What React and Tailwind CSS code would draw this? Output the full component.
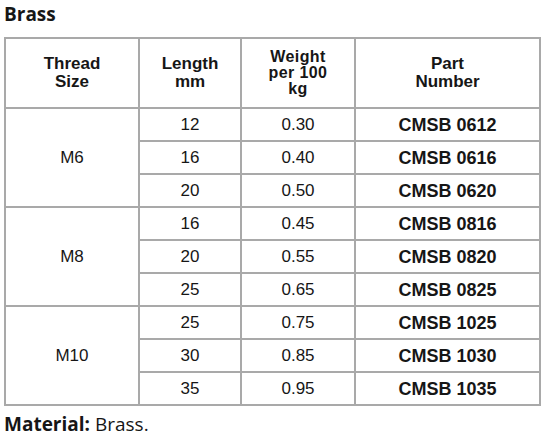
const groups = [
  {
    size: "M6",
    rows: [
      ["12", "0.30", "CMSB 0612"],
      ["16", "0.40", "CMSB 0616"],
      ["20", "0.50", "CMSB 0620"],
    ],
  },
  {
    size: "M8",
    rows: [
      ["16", "0.45", "CMSB 0816"],
      ["20", "0.55", "CMSB 0820"],
      ["25", "0.65", "CMSB 0825"],
    ],
  },
  {
    size: "M10",
    rows: [
      ["25", "0.75", "CMSB 1025"],
      ["30", "0.85", "CMSB 1030"],
      ["35", "0.95", "CMSB 1035"],
    ],
  },
];

const cell = "border-2 border-[#a9a9a9] text-center p-0";

export default function App() {
  return (
    <div className="w-[544px] h-[438px] bg-white text-[#161616] overflow-hidden">
      <h1 className="pt-[5px] pl-[4px] text-[19px] leading-none font-bold font-['Open_Sans',sans-serif]">
        Brass
      </h1>

      <table className="mt-[13px] ml-[4px] w-[535px] table-fixed border-collapse font-['Liberation_Sans',Arial,sans-serif]">
        <colgroup>
          <col className="w-[134px]" />
          <col className="w-[102px]" />
          <col className="w-[114px]" />
          <col className="w-[185px]" />
        </colgroup>
        <thead>
          <tr className="h-[70px] text-[17px] font-bold">
            <th className={`${cell} leading-[18px]`}>
              Thread
              <br />
              Size
            </th>
            <th className={`${cell} leading-[18px]`}>
              Length
              <br />
              mm
            </th>
            <th className={`${cell} leading-[16px] text-[16px] tracking-[0.4px]`}>
              Weight
              <br />
              per 100
              <br />
              kg
            </th>
            <th className={`${cell} leading-[18px]`}>
              Part
              <br />
              Number
            </th>
          </tr>
        </thead>
        <tbody className="text-[17px] leading-none">
          {groups.map((g) =>
            g.rows.map((r, i) => (
              <tr key={g.size + i} className="h-[33px]">
                {i === 0 && (
                  <td rowSpan={3} className={cell}>
                    {g.size}
                  </td>
                )}
                <td className={cell}>{r[0]}</td>
                <td className={cell}>{r[1]}</td>
                <td className={`${cell} font-bold text-[18px]`}>{r[2]}</td>
              </tr>
            ))
          )}
        </tbody>
      </table>

      <p className="mt-[9px] pl-[4px] text-[19px] leading-none font-['Open_Sans',sans-serif]">
        <span className="font-bold">Material:</span> Brass.
      </p>
    </div>
  );
}
